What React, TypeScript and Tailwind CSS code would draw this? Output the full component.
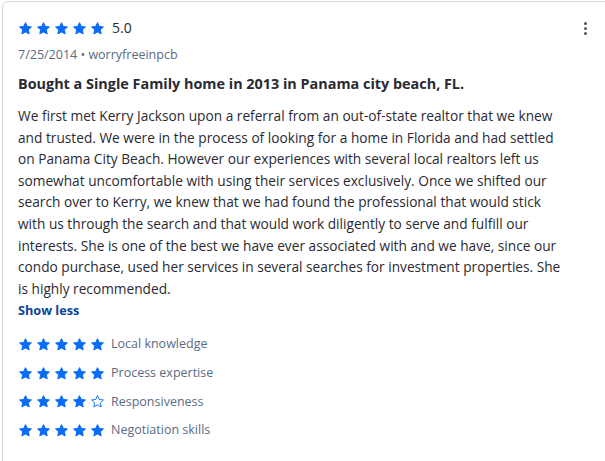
import React from 'react';

const StarIcon: React.FC<{ filled?: boolean }> = ({ filled = true }) => (
  <svg viewBox="0 0 24 24" className="h-[15px] w-[15px]" aria-hidden="true">
    <path
      d="M12 2.6l2.9 6.1 6.6.8-4.9 4.6 1.3 6.6L12 17.4l-5.9 3.3 1.3-6.6-4.9-4.6 6.6-.8z"
      fill={filled ? '#0a6cf5' : 'none'}
      stroke="#0a6cf5"
      strokeWidth={filled ? 1.6 : 1.5}
      strokeLinejoin="round"
    />
  </svg>
);

const Stars: React.FC<{ count: number }> = ({ count }) => (
  <div className="flex items-center gap-[3px]">
    {[0, 1, 2, 3, 4].map((i) => (
      <StarIcon key={i} filled={i < count} />
    ))}
  </div>
);

export default function App() {
  const ratings = [
    { label: 'Local knowledge', stars: 5 },
    { label: 'Process expertise', stars: 5 },
    { label: 'Responsiveness', stars: 4 },
    { label: 'Negotiation skills', stars: 5 },
  ];

  return (
    <div className="h-[461px] w-[605px] overflow-hidden bg-white pl-[2px] pt-[1px] font-['Open_Sans',sans-serif]">
      <div className="h-[520px] w-[640px] rounded-tl-[6px] border border-[#d6d6d6] pl-[15px] pt-[16px]">
        <div className="flex w-[572px] items-center justify-between">
          <div className="flex items-center gap-[7px]">
            <Stars count={5} />
            <span className="text-[14px] leading-[20px] text-[#2a2a33]">5.0</span>
          </div>
          <div className="mr-[3px] flex flex-col gap-[2px]">
            <span className="block h-[3px] w-[3px] rounded-full bg-[#555]" />
            <span className="block h-[3px] w-[3px] rounded-full bg-[#555]" />
            <span className="block h-[3px] w-[3px] rounded-full bg-[#555]" />
          </div>
        </div>

        <div className="mt-[8px] text-[12.5px] leading-[18px] text-[#596b82]">7/25/2014 • worryfreeinpcb</div>

        <div className="mt-[10px] text-[14.4px] font-bold leading-[20px] text-[#2a2a33]">
          Bought a Single Family home in 2013 in Panama city beach, FL.
        </div>

        <p className="mt-[11px] w-[550px] text-[13.7px] leading-[21.6px] text-[#2a2a33]">
          We first met Kerry Jackson upon a referral from an out-of-state realtor that we knew and trusted. We were in the
          process of looking for a home in Florida and had settled on Panama City Beach. However our experiences with
          several local realtors left us somewhat uncomfortable with using their services exclusively. Once we shifted our
          search over to Kerry, we knew that we had found the professional that would stick with us through the search and
          that would work diligently to serve and fulfill our interests. She is one of the best we have ever associated
          with and we have, since our condo purchase, used her services in several searches for investment properties. She
          is highly recommended.
        </p>

        <button className="mt-[2px] block text-[12.7px] font-bold leading-[18px] text-[#0d4599]">Show less</button>

        <div className="mt-[15px] flex flex-col gap-[8.7px]">
          {ratings.map((r) => (
            <div key={r.label} className="flex items-center gap-[6px]">
              <Stars count={r.stars} />
              <span className="text-[12.5px] leading-[20px] text-[#596b82]">{r.label}</span>
            </div>
          ))}
        </div>
      </div>
    </div>
  );
}
